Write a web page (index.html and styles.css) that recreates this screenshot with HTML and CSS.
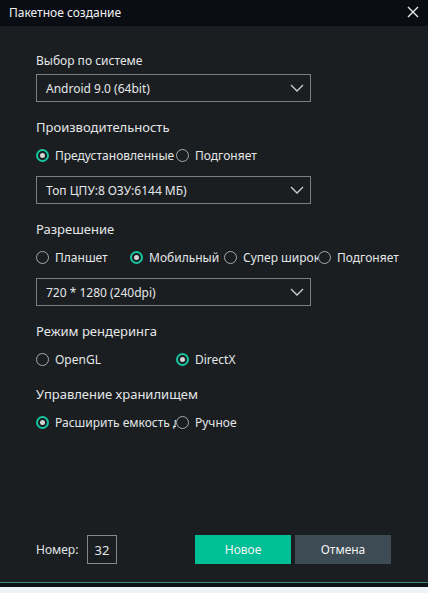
FILE: index.html
```html
<!DOCTYPE html>
<html lang="ru">
<head>
<meta charset="utf-8">
<title>Пакетное создание</title>
<link rel="stylesheet" href="styles.css">
</head>
<body>
<div class="dialog">
  <header class="titlebar">
    <span class="title">Пакетное создание</span>
    <svg class="close" width="12" height="12" viewBox="0 0 12 12"><path d="M1 1 L11 11 M11 1 L1 11" stroke="#e8e8e8" stroke-width="1.4" fill="none"/></svg>
  </header>

  <main class="content">
    <div class="label">Выбор по системе</div>
    <div class="select">
      <span>Android 9.0 (64bit)</span>
      <svg class="chev" width="14" height="8" viewBox="0 0 14 8"><path d="M1 1 L7 7 L13 1" stroke="#d0d0d0" stroke-width="1.3" fill="none"/></svg>
    </div>

    <div class="heading">Производительность</div>
    <div class="radios two">
      <div class="opt"><i class="radio on"></i><span>Предустановленные</span></div>
      <div class="opt"><i class="radio"></i><span>Подгоняет</span></div>
    </div>
    <div class="select">
      <span>Топ ЦПУ:8 ОЗУ:6144 МБ)</span>
      <svg class="chev" width="14" height="8" viewBox="0 0 14 8"><path d="M1 1 L7 7 L13 1" stroke="#d0d0d0" stroke-width="1.3" fill="none"/></svg>
    </div>

    <div class="heading">Разрешение</div>
    <div class="radios four">
      <div class="opt"><i class="radio"></i><span>Планшет</span></div>
      <div class="opt"><i class="radio on"></i><span>Мобильный</span></div>
      <div class="opt"><i class="radio"></i><span>Супер широкий</span></div>
      <div class="opt"><i class="radio"></i><span>Подгоняет</span></div>
    </div>
    <div class="select">
      <span>720 * 1280 (240dpi)</span>
      <svg class="chev" width="14" height="8" viewBox="0 0 14 8"><path d="M1 1 L7 7 L13 1" stroke="#d0d0d0" stroke-width="1.3" fill="none"/></svg>
    </div>

    <div class="heading">Режим рендеринга</div>
    <div class="radios two">
      <div class="opt"><i class="radio"></i><span>OpenGL</span></div>
      <div class="opt"><i class="radio on"></i><span>DirectX</span></div>
    </div>

    <div class="heading">Управление хранилищем</div>
    <div class="radios two">
      <div class="opt"><i class="radio on"></i><span>Расширить емкость диска</span></div>
      <div class="opt"><i class="radio"></i><span>Ручное</span></div>
    </div>
  </main>

  <footer class="footer">
    <span class="num-label">Номер:</span>
    <div class="num">32</div>
    <button class="btn primary">Новое</button>
    <button class="btn secondary">Отмена</button>
  </footer>

  <div class="edge"></div>
</div>
</body>
</html>
```

FILE: styles.css
```css
* { box-sizing: border-box; }

html, body {
  margin: 0;
  padding: 0;
  width: 428px;
  height: 593px;
  overflow: hidden;
  background: #1a1e21;
}

body {
  font-family: "Noto Sans", "Open Sans", sans-serif;
  color: #e4e6e8;
}

.dialog {
  display: flex;
  flex-direction: column;
  height: 593px;
}

.titlebar {
  height: 26px;
  flex: none;
  background: #0a0d14;
  display: flex;
  align-items: center;
  justify-content: space-between;
  padding: 0 9px 2px 9px;
}

.title {
  font-size: 12px;
  color: #f2f2f2;
}

.close { display: block; }

.content {
  flex: 1;
  padding: 27px 0 0 36px;
}

.label {
  font-size: 12px;
  line-height: 16px;
  height: 16px;
}

.heading {
  font-size: 13px;
  line-height: 18px;
  height: 18px;
  margin-top: 16px;
}

.select {
  width: 275px;
  height: 28px;
  border: 1px solid #7c7f82;
  display: flex;
  align-items: center;
  justify-content: space-between;
  padding: 0 6px 0 9px;
  font-size: 12px;
  margin-top: 5px;
}

.heading + .radios { margin-top: 9px; }
.radios + .select { margin-top: 11px; }

.radios {
  display: grid;
  height: 20px;
  align-items: center;
  font-size: 12px;
}

.radios.two { grid-template-columns: 140px 140px; }
.radios.four { grid-template-columns: 94px 94px 94px 94px; }

.opt {
  display: flex;
  align-items: center;
  gap: 6px;
  overflow: hidden;
  white-space: nowrap;
}

.radio {
  flex: none;
  width: 13px;
  height: 13px;
  border-radius: 50%;
  border: 1.5px solid #a7a9ab;
  position: relative;
}

.radio.on {
  border: 2px solid #16c59f;
}

.radio.on::after {
  content: "";
  position: absolute;
  left: 2px;
  top: 2px;
  width: 5px;
  height: 5px;
  border-radius: 50%;
  background: #d4d4d4;
}

.footer {
  flex: none;
  display: flex;
  align-items: center;
  height: 29px;
  margin-bottom: 18px;
  padding-left: 36px;
  font-size: 12px;
}

.num-label { width: 51px; }

.num {
  width: 30px;
  height: 29px;
  border: 1px solid #85888a;
  display: flex;
  align-items: center;
  justify-content: center;
  font-size: 13px;
}

.btn {
  height: 29px;
  width: 96px;
  border: none;
  font-family: inherit;
  font-size: 12px;
  color: #f2f2f2;
  padding: 0;
}

.btn.primary { background: #00bf96; margin-left: 78px; }
.btn.secondary { background: #3c4b54; margin-left: 4px; }

.edge {
  flex: none;
  height: 11px;
  border-top: 1px solid #3c8a7a;
  background: linear-gradient(#0d1114 0 4px, #eef3f6 4px);
}
```
